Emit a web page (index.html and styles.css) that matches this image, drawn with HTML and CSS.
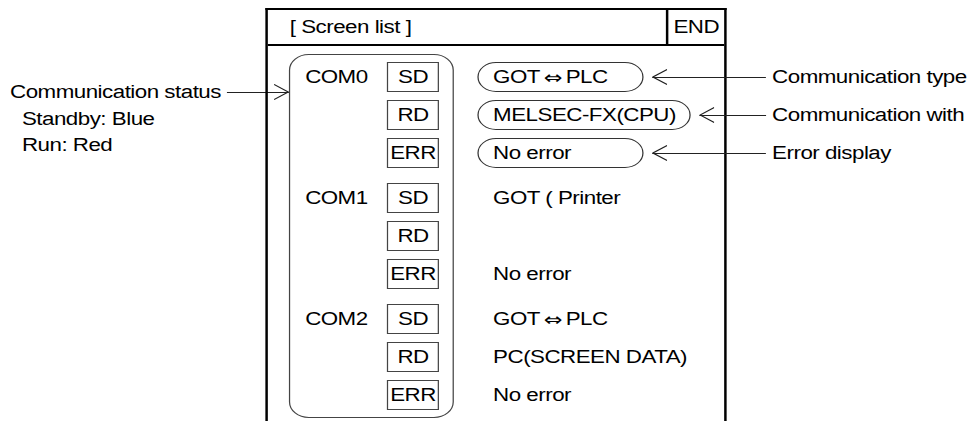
FILE: index.html
```html
<!DOCTYPE html>

<html>
	<head>
		<meta charset="UTF-8" />
		<title>Screen list</title>
		<link rel="stylesheet" href="styles.css">
	</head>
	<body>
		<div class="sheet">
			<div class="notes">
				<div class="note-lead">
					<span>Communication status</span>
					<span class="lead-line">
						<svg class="head-right" viewBox="0 0 12 16"><path d="M0 0.5 L11.5 8 L0 15.5" /></svg>
					</span>
				</div>
				<div class="note-sub">Standby: Blue</div>
				<div class="note-sub">Run: Red</div>
			</div>

			<div class="panel">
				<div class="panel-head">
					<div class="panel-title">[ Screen list ]</div>
					<div class="panel-end">END</div>
				</div>
				<div class="panel-body">
					<div class="ports">
						<div class="port">
							<span class="port-name">COM0</span><span class="sig">SD</span>
							<span></span><span class="sig">RD</span>
							<span></span><span class="sig">ERR</span>
						</div>
						<div class="port">
							<span class="port-name">COM1</span><span class="sig">SD</span>
							<span></span><span class="sig">RD</span>
							<span></span><span class="sig">ERR</span>
						</div>
						<div class="port">
							<span class="port-name">COM2</span><span class="sig">SD</span>
							<span></span><span class="sig">RD</span>
							<span></span><span class="sig">ERR</span>
						</div>
					</div>

					<div class="status">
						<div class="status-group">
							<div class="status-row">
								<div class="status-cell">
									<span class="pill">GOT <span class="dir">&hArr;</span> PLC</span>
									<span class="callout"><svg class="head-left" viewBox="0 0 12 16"><path d="M12 0.5 L0.5 8 L12 15.5" /></svg></span>
								</div>
								<span class="callout-label">Communication type</span>
							</div>
							<div class="status-row">
								<div class="status-cell">
									<span class="pill">MELSEC-FX(CPU)</span>
									<span class="callout"><svg class="head-left" viewBox="0 0 12 16"><path d="M12 0.5 L0.5 8 L12 15.5" /></svg></span>
								</div>
								<span class="callout-label">Communication with</span>
							</div>
							<div class="status-row">
								<div class="status-cell">
									<span class="pill">No error</span>
									<span class="callout"><svg class="head-left" viewBox="0 0 12 16"><path d="M12 0.5 L0.5 8 L12 15.5" /></svg></span>
								</div>
								<span class="callout-label">Error display</span>
							</div>
						</div>
						<div class="status-group">
							<div class="status-row"><span class="pill plain">GOT ( Printer</span></div>
							<div class="status-row"><span class="pill plain"></span></div>
							<div class="status-row"><span class="pill plain">No error</span></div>
						</div>
						<div class="status-group">
							<div class="status-row"><span class="pill plain">GOT <span class="dir">&hArr;</span> PLC</span></div>
							<div class="status-row"><span class="pill plain">PC(SCREEN DATA)</span></div>
							<div class="status-row"><span class="pill plain">No error</span></div>
						</div>
					</div>
				</div>
			</div>
		</div>
	</body>
</html>
```

FILE: styles.css
```css
body {
	margin: 0;
	overflow: hidden;
	background: #fff;
	color: #000;
	font-family: "Liberation Sans", Arial, sans-serif;
	font-size: 18px;
	letter-spacing: -0.4px;
}

.sheet {
	display: flex;
	align-items: flex-start;
	width: 786px;
	padding-top: 8px;
	transform: scaleX(1.24);
	transform-origin: 0 0;
}

.notes {
	flex: none;
	width: 205.6px;
	margin-left: 8.1px;
	margin-top: 71px;
	line-height: 26.5px;
	white-space: nowrap;
}
.note-lead {
	display: flex;
	align-items: center;
}
.note-sub {
	padding-left: 9.6px;
}
.lead-line {
	flex: 1;
	display: flex;
	justify-content: flex-end;
	align-items: center;
	height: 16px;
	margin-left: 5px;
	margin-right: -19.4px;
	background: linear-gradient(#222, #222) center / 100% 1px no-repeat;
}
.head-right, .head-left {
	width: 12px;
	height: 16px;
	fill: none;
	stroke: #222;
	stroke-width: 1;
}

.panel {
	flex: none;
	box-sizing: border-box;
	width: 372.6px;
	height: 413px;
	border: 2px solid #000;
	border-bottom: 0;
}
.panel-head {
	display: flex;
	height: 34px;
	line-height: 34px;
	border-bottom: 2px solid #000;
}
.panel-title {
	flex: 1;
	padding-left: 18px;
}
.panel-end {
	width: 45.6px;
	border-left: 2px solid #000;
	text-align: center;
}

.panel-body {
	display: flex;
	align-items: flex-start;
	gap: 18.6px;
	padding: 8px 0 0 17.4px;
}

.ports {
	flex: none;
	box-sizing: border-box;
	width: 133px;
	display: flex;
	flex-direction: column;
	gap: 15px;
	padding: 7px 11px 7px 12px;
	border: 1px solid #444;
	border-radius: 16px;
}
.port {
	display: grid;
	grid-template-columns: 1fr 42px;
	grid-auto-rows: 30px;
	row-gap: 8px;
	align-items: center;
}
.sig {
	box-sizing: border-box;
	height: 30px;
	line-height: 28px;
	border: 1px solid #444;
	text-align: center;
}

.status {
	flex: none;
	display: flex;
	flex-direction: column;
	gap: 15px;
	padding-top: 8px;
}
.status-group {
	display: flex;
	flex-direction: column;
	gap: 8px;
}
.status-row {
	display: grid;
	grid-template-columns: 233px auto;
	align-items: center;
	height: 30px;
}
.status-cell {
	display: flex;
	align-items: center;
}
.pill {
	box-sizing: border-box;
	display: flex;
	align-items: center;
	min-width: 134.7px;
	height: 30px;
	padding: 0 11px 0 12px;
	border: 1px solid #333;
	border-radius: 15px;
	white-space: nowrap;
}
.pill.plain {
	border-color: transparent;
}
.dir {
	font-family: "DejaVu Sans", sans-serif;
	font-size: 18px;
	margin: 0 3px;
}
.callout {
	flex: 1;
	display: flex;
	align-items: center;
	height: 16px;
	margin-left: 7px;
	background: linear-gradient(#222, #222) center / 100% 1px no-repeat;
}
.callout-label {
	padding-left: 5px;
	white-space: nowrap;
}
```
